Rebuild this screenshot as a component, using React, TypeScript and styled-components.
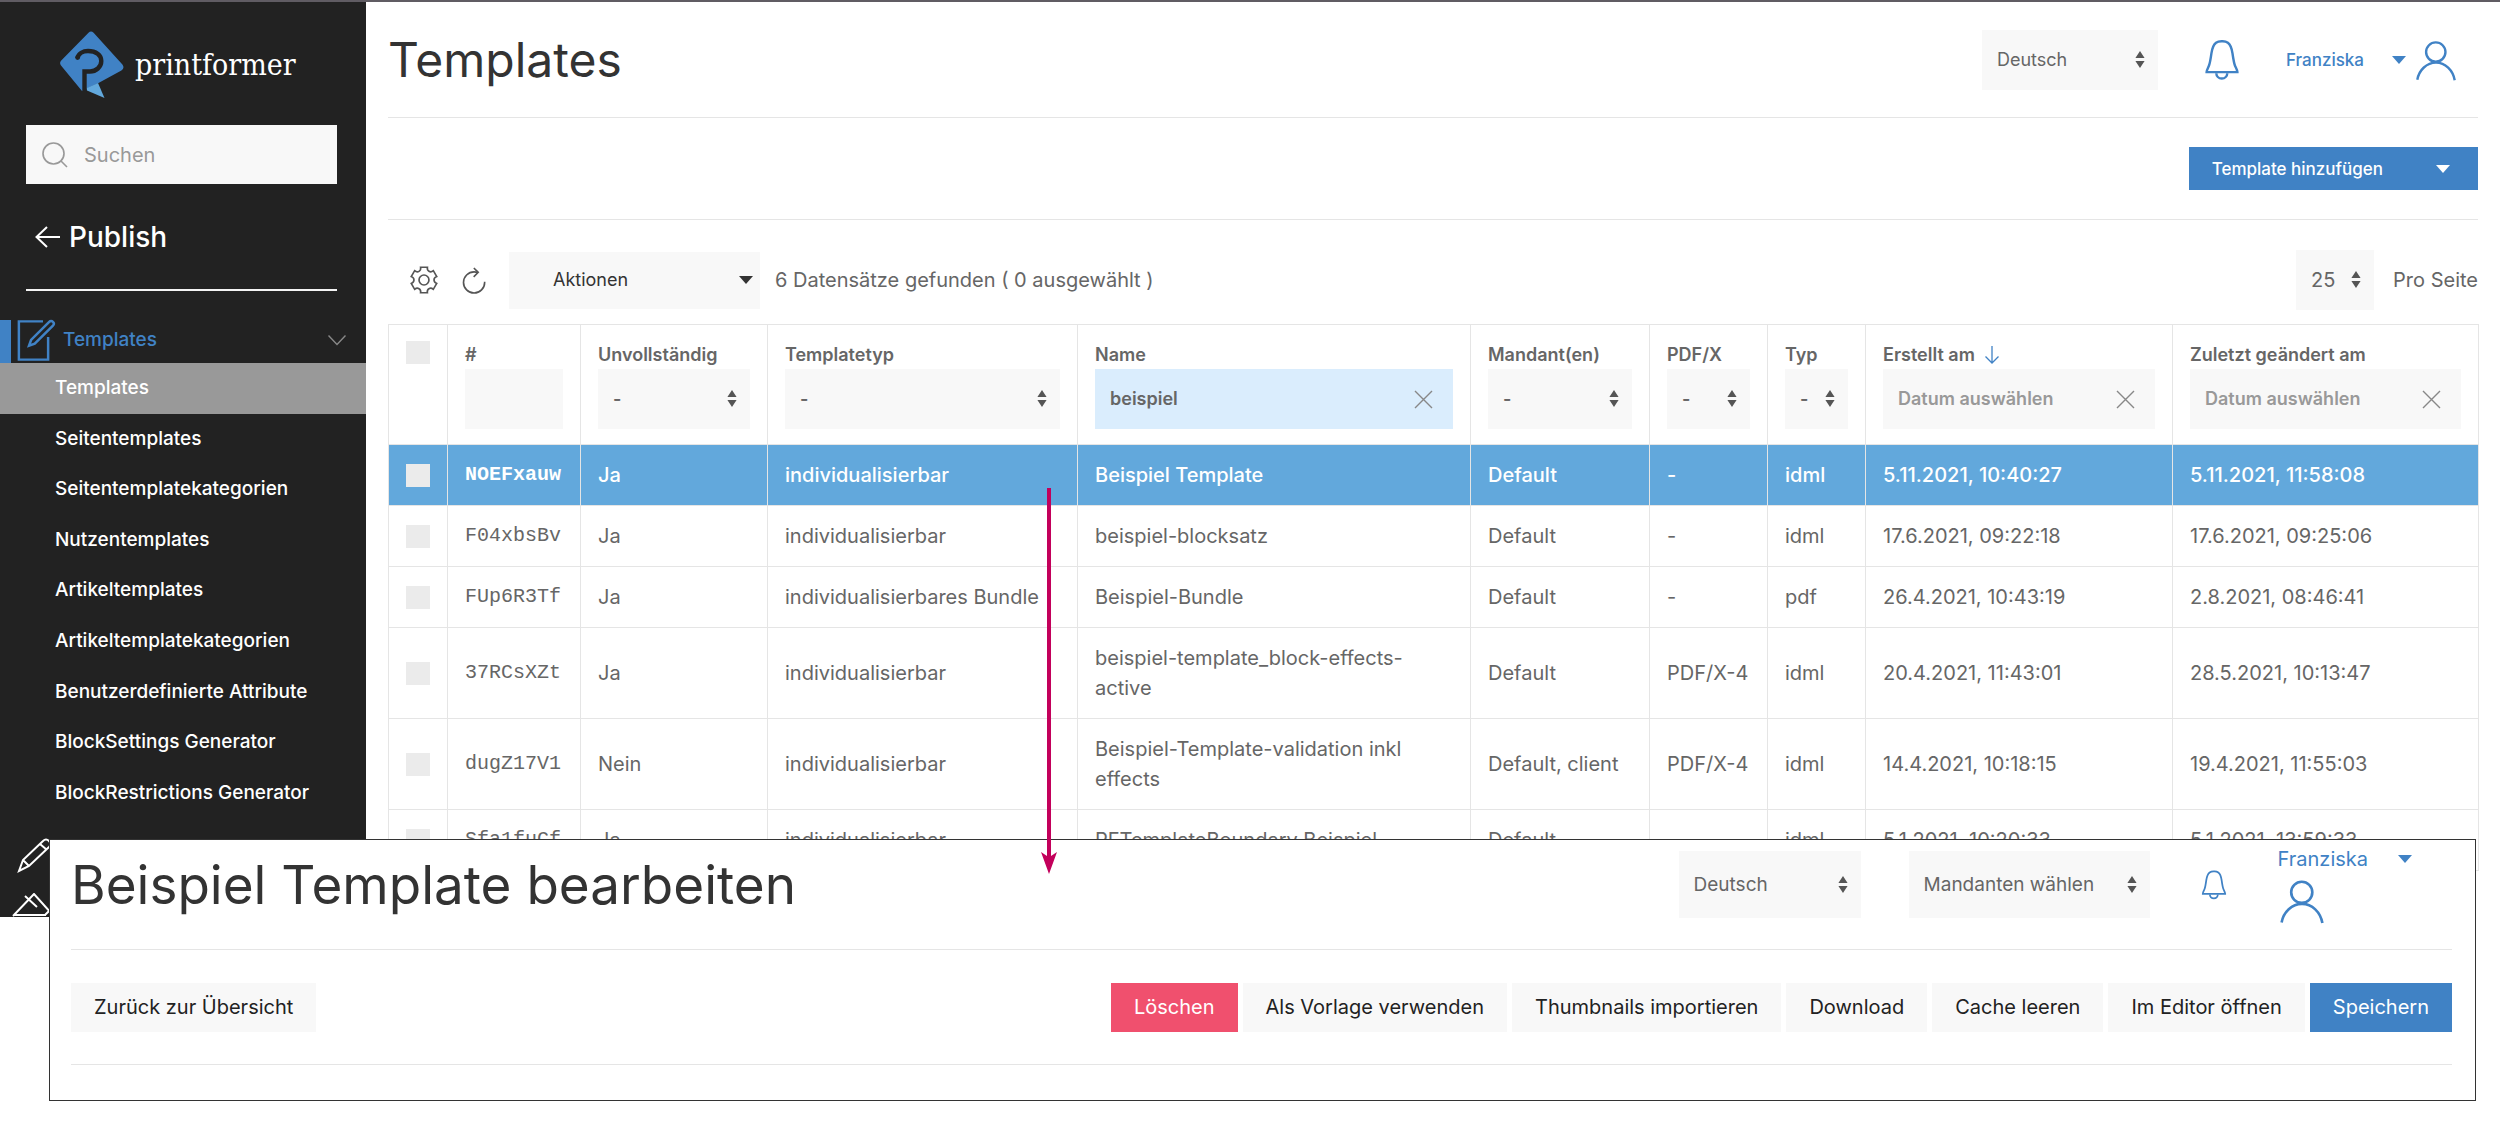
import React from "react";
import styled, { createGlobalStyle, css } from "styled-components";

const blue = "#4082c5";
const muted = "#f8f8f8";
const line = "#e5e5e5";

const GlobalStyle = createGlobalStyle`
  *, *::before, *::after { box-sizing: border-box; }
  body {
    margin: 0;
    background: #fff;
    color: #666;
    font-family: Inter, "Liberation Sans", sans-serif;
    font-size: 20px;
    line-height: 30px;
  }
  h1, h2, p, ul { margin: 0; padding: 0; font-weight: 400; }
  ul { list-style: none; }
  button, input, select { font: inherit; color: inherit; border: 0; border-radius: 0; margin: 0; }
  a { color: inherit; text-decoration: none; }
  svg { display: block; flex: none; }
`;

/* ---------- shared ---------- */

const Icon = styled.svg<{ $size: number; $stroke?: number }>`
  width: ${(p) => p.$size}px;
  height: ${(p) => p.$size}px;
  fill: none;
  stroke: currentColor;
  stroke-width: ${(p) => p.$stroke ?? 1.1};
`;

const Caret = styled.span`
  flex: none;
  border: 7px solid transparent;
  border-top: 8px solid currentColor;
  border-bottom: 0;
`;

const SelectBox = styled.span<{ $height?: number; $width?: string; $size?: number }>`
  display: grid;
  align-items: center;
  width: ${(p) => p.$width ?? "100%"};
  height: ${(p) => p.$height ?? 60}px;
  background: ${muted};
  font-size: ${(p) => p.$size ?? 18}px;

  > * { grid-area: 1 / 1; }
  > svg { justify-self: end; margin-right: 13px; fill: #555; pointer-events: none; }
`;

const NativeSelect = styled.select`
  appearance: none;
  width: 100%;
  height: 100%;
  padding: 0 30px 0 15px;
  background: transparent;
`;

function Select(props: { label: string; value: string; height?: number; width?: string; size?: number }) {
  return (
    <SelectBox $height={props.height} $width={props.width} $size={props.size}>
      <NativeSelect aria-label={props.label} defaultValue={props.value}>
        <option>{props.value}</option>
      </NativeSelect>
      <svg width="10" height="18" viewBox="0 0 10 18" aria-hidden="true">
        <path d="M5 0 L9.6 7 H0.4 Z M0.4 10 H9.6 L5 17 Z" />
      </svg>
    </SelectBox>
  );
}

function Bell({ size }: { size: number }) {
  return (
    <Icon $size={size} viewBox="0 0 20 20" aria-hidden="true">
      <path d="M17,15.5 L3,15.5 C2.99,14.61 3.79,13.34 4.1,12.51 C4.58,11.3 4.72,10.35 5.19,7.01 C5.54,4.53 5.89,3.2 7.28,2.16 C8.13,1.56 9.37,1.5 9.81,1.5 L9.96,1.5 C9.96,1.5 11.62,1.41 12.67,2.17 C14.08,3.2 14.42,4.54 14.77,7.02 C15.26,10.35 15.4,11.31 15.87,12.52 C16.2,13.34 17.01,14.61 17,15.5 Z" />
      <path d="M12.39,16 C12.39,17.37 11.35,18.43 9.91,18.43 C8.48,18.43 7.42,17.37 7.42,16" />
    </Icon>
  );
}

function User({ size }: { size: number }) {
  return (
    <Icon $size={size} viewBox="0 0 20 20" aria-hidden="true">
      <circle cx="9.9" cy="6.4" r="4.4" />
      <path d="M1.5,19 C2.3,14.5 5.8,11.2 10,11.2 C14.2,11.2 17.7,14.6 18.5,19.2" />
    </Icon>
  );
}

/* ---------- sidebar ---------- */

const Window = styled.div`
  display: flex;
  border-top: 2px solid #605c63;
`;

const Sidebar = styled.aside`
  flex: 0 0 366px;
  min-width: 0;
  display: flex;
  flex-direction: column;
  padding-top: 29px;
  background: #222;
  color: #fff;
`;

const Brand = styled.a`
  display: flex;
  align-items: center;
  gap: 11px;
  margin: 0 60px 26px;
  font-family: "DejaVu Serif Condensed", "DejaVu Serif", serif;
  font-size: 30px;
`;

const SearchBox = styled.label`
  display: flex;
  align-items: center;
  gap: 14px;
  height: 59px;
  margin: 0 29px 31px 26px;
  padding: 0 14px;
  background: ${muted};
  color: #999;
`;

const SearchInput = styled.input`
  flex: 1;
  min-width: 0;
  padding: 0;
  background: transparent;
  &::placeholder { color: #999; opacity: 1; }
`;

const BackLink = styled.a`
  display: flex;
  align-items: center;
  gap: 8px;
  margin: 0 29px 29px 26px;
  padding: 0 0 30px 9px;
  border-bottom: 2px solid #f4f4f4;
  font-size: 28px;
  font-weight: 500;
  line-height: 44px;
`;

const MenuGroup = styled.a`
  display: flex;
  align-items: center;
  height: 43px;
  padding: 0 20px 3px 0;
  border-left: 11px solid ${blue};
  color: ${blue};
  font-size: 19px;
  font-weight: 500;

  > svg:last-child { margin-left: auto; color: #888; }
`;

const MenuGroupLabel = styled.span`
  margin-left: 7px;
`;

const SubMenu = styled.ul`
  flex: 1;
  display: grid;
  grid-auto-rows: 1fr;
`;

const SubMenuLink = styled.a<{ $active?: boolean }>`
  display: flex;
  align-items: center;
  height: 100%;
  padding-left: 55px;
  font-size: 19px;
  font-weight: 500;
  ${(p) => p.$active && css`background: #999;`}
`;

const Rail = styled.div`
  display: flex;
  flex-direction: column;
  gap: 20px;
  padding: 20px 0 0 12px;
`;

/* ---------- main ---------- */

const Main = styled.main`
  flex: 1;
  min-width: 0;
  padding: 0 22px 46px;
`;

const Header = styled.header`
  display: flex;
  align-items: center;
  height: 116px;
  padding-right: 20px;
  border-bottom: 1px solid ${line};
`;

const Title = styled.h1`
  margin-right: auto;
  color: #333;
  font-size: 48px;
  line-height: 60px;
`;

const IconButton = styled.button`
  display: flex;
  padding: 0;
  background: transparent;
`;

const BlueIconButton = styled(IconButton)`
  margin: 0 42px;
  color: ${blue};
`;

const UserLink = styled.a`
  display: flex;
  align-items: center;
  gap: 8px;
  color: ${blue};
  font-size: 17px;
  font-weight: 500;
`;

const UserName = styled.span`
  margin-right: 20px;
`;

const ActionBar = styled.div`
  display: flex;
  align-items: center;
  justify-content: flex-end;
  height: 102px;
  border-bottom: 1px solid ${line};
`;

const AddButton = styled.button`
  display: flex;
  align-items: center;
  gap: 53px;
  height: 43px;
  padding: 0 28px 0 23px;
  background: ${blue};
  color: #fff;
  font-size: 17px;
  font-weight: 500;
`;

const Toolbar = styled.div`
  display: flex;
  align-items: center;
  gap: 20px;
  height: 104px;
  padding: 16px 0 0 21px;
  color: #555;
`;

const BulkButton = styled.button`
  display: flex;
  align-items: center;
  justify-content: space-between;
  width: 251px;
  height: 57px;
  padding: 0 7px 0 44px;
  background: ${muted};
  color: #333;
  font-size: 18px;
`;

const ResultCount = styled.p`
  margin-right: auto;
  margin-left: -5px;
  color: #666;
`;

const PerPage = styled.label`
  display: flex;
  align-items: center;
  gap: 19px;
  color: #666;
`;

/* ---------- table ---------- */

const Table = styled.table`
  width: 100%;
  table-layout: fixed;
  border-collapse: collapse;

  th, td {
    border: 1px solid ${line};
    text-align: left;
  }
`;

const HeadCell = styled.th`
  padding: 16px 17px 15px;
  vertical-align: top;
  font-size: 18px;
  font-weight: 600;
  line-height: 28px;
`;

const HeadLabel = styled.span`
  display: flex;
  align-items: center;
  gap: 8px;
  white-space: nowrap;
`;

const FilterBox = styled.span<{ $active?: boolean }>`
  display: flex;
  align-items: center;
  height: 60px;
  padding: 0 20px 0 15px;
  background: ${(p) => (p.$active ? "#daedfd" : muted)};
`;

const FilterInput = styled.input`
  flex: 1;
  min-width: 0;
  width: 100%;
  padding: 0;
  background: transparent;
  &::placeholder { color: #999; opacity: 1; }
`;

const ClearButton = styled(IconButton)`
  color: #888;
`;

const Cell = styled.td`
  padding: 15px 17px;
`;

const CodeCell = styled(Cell)`
  font-family: "Courier New", "Liberation Mono", monospace;
  white-space: nowrap;
`;

const Row = styled.tr<{ $selected?: boolean }>`
  ${(p) =>
    p.$selected &&
    css`
      background: #62a8dc;
      color: #fff;
      font-weight: 500;

      ${CodeCell} { font-weight: 700; }
    `}
`;

const Checkbox = styled.input`
  display: block;
  appearance: none;
  width: 24px;
  height: 23px;
  background: #ebebeb;
`;

/* ---------- edit panel ---------- */

const Panel = styled.section`
  position: relative;
  margin: -78px 24px 20px 49px;
  padding: 0 23px 35px 21px;
  background: #fff;
  border: 1px solid #333;
`;

const PanelHeader = styled.header`
  display: flex;
  align-items: center;
  gap: 48px;
  height: 110px;
  padding: 0 40px 20px 0;
  border-bottom: 1px solid ${line};
`;

const PanelTitle = styled.h2`
  margin-right: auto;
  color: #333;
  font-size: 53px;
  line-height: 68px;
  white-space: nowrap;
`;

const PanelBell = styled(IconButton)`
  color: ${blue};
`;

const PanelUser = styled.a`
  display: grid;
  row-gap: 3px;
  color: ${blue};
`;

const PanelUserName = styled.span`
  display: flex;
  align-items: center;
  gap: 30px;
`;

const PanelActions = styled.div`
  display: flex;
  align-items: center;
  gap: 5px;
  height: 115px;
  border-bottom: 1px solid ${line};

  > :first-child { margin-right: auto; }
`;

const tones = {
  plain: css`background: ${muted}; color: #222;`,
  danger: css`background: #f0506e; color: #fff;`,
  primary: css`background: ${blue}; color: #fff;`,
};

const PanelButton = styled.button<{ $tone?: keyof typeof tones }>`
  height: 49px;
  padding: 0 23px;
  white-space: nowrap;
  ${(p) => tones[p.$tone ?? "plain"]}
`;

const Page = styled.div`
  position: relative;
`;

const Pointer = styled.svg`
  position: absolute;
  left: 1041px;
  top: 488px;
  fill: #c3005b;
`;

/* ---------- data ---------- */

const subMenu = [
  "Templates",
  "Seitentemplates",
  "Seitentemplatekategorien",
  "Nutzentemplates",
  "Artikeltemplates",
  "Artikeltemplatekategorien",
  "Benutzerdefinierte Attribute",
  "BlockSettings Generator",
  "BlockRestrictions Generator",
];

const columns = [59, 133, 187, 310, 393, 179, 118, 98, 307, 306];

const rows = [
  ["NOEFxauw", "Ja", "individualisierbar", "Beispiel Template", "Default", "-", "idml", "5.11.2021, 10:40:27", "5.11.2021, 11:58:08"],
  ["F04xbsBv", "Ja", "individualisierbar", "beispiel-blocksatz", "Default", "-", "idml", "17.6.2021, 09:22:18", "17.6.2021, 09:25:06"],
  ["FUp6R3Tf", "Ja", "individualisierbares Bundle", "Beispiel-Bundle", "Default", "-", "pdf", "26.4.2021, 10:43:19", "2.8.2021, 08:46:41"],
  ["37RCsXZt", "Ja", "individualisierbar", "beispiel-template_block-effects-active", "Default", "PDF/X-4", "idml", "20.4.2021, 11:43:01", "28.5.2021, 10:13:47"],
  ["dugZ17V1", "Nein", "individualisierbar", "Beispiel-Template-validation inkl effects", "Default, client", "PDF/X-4", "idml", "14.4.2021, 10:18:15", "19.4.2021, 11:55:03"],
  ["Sfa1fuCf", "Ja", "individualisierbar", "PFTemplateBoundary Beispiel", "Default", "-", "idml", "5.1.2021, 10:20:33", "5.1.2021, 13:59:33"],
];

function Clear({ label }: { label: string }) {
  return (
    <ClearButton type="button" aria-label={label}>
      <Icon $size={19} $stroke={1.4} viewBox="0 0 19 19" aria-hidden="true">
        <path d="M1 1 L18 18 M18 1 L1 18" />
      </Icon>
    </ClearButton>
  );
}

function SelectHead({ title }: { title: string }) {
  return (
    <HeadCell scope="col">
      <HeadLabel>{title}</HeadLabel>
      <Select label={`${title} filtern`} value="-" />
    </HeadCell>
  );
}

function DateHead({ title, sorted }: { title: string; sorted?: boolean }) {
  return (
    <HeadCell scope="col">
      <HeadLabel>
        {title}
        {sorted && (
          <Icon $size={18} $stroke={1.3} viewBox="0 0 18 18" color={blue} aria-hidden="true">
            <path d="M9 0 V17 M2.5 10.5 L9 17 L15.5 10.5" />
          </Icon>
        )}
      </HeadLabel>
      <FilterBox>
        <FilterInput type="text" aria-label={`${title} filtern`} placeholder="Datum auswählen" />
        <Clear label={`${title} zurücksetzen`} />
      </FilterBox>
    </HeadCell>
  );
}

function Logo() {
  return (
    <svg width="64" height="68" viewBox="0 0 64 68" aria-hidden="true">
      <path
        fill={blue}
        d="M28.5 1.8 Q31 -0.6 33.6 1.8 L62.4 33.4 Q65 37 61.4 39.6 L38.5 52 L27 57.5 L26 60 L22 60 L1 34.6 Q-0.8 32 1 29.8 Z"
      />
      <path fill="#62a8dc" d="M27 57 L38 52 L44.5 67 L27 59.5 Z" />
      <path
        d="M17.5 27 C18.5 22.5 23 20 28 20 C36 20 41.3 24 41.3 30 C41.3 36 36 40.5 30 40.5 L24.5 40.5 L24.5 63"
        fill="none"
        stroke="#222"
        strokeWidth="4.4"
      />
      <circle cx="17.6" cy="26.6" r="2.4" fill="#222" />
    </svg>
  );
}

export default function App() {
  return (
    <Page>
      <GlobalStyle />
      <Window>
        <Sidebar>
          <Brand href="#">
            <Logo />
            printformer
          </Brand>
          <SearchBox>
            <Icon $size={30} viewBox="0 0 20 20" aria-hidden="true">
              <circle cx="9" cy="9" r="7" />
              <path d="M14,14 L18,18" />
            </Icon>
            <SearchInput type="search" aria-label="Suchen" placeholder="Suchen" />
          </SearchBox>
          <BackLink href="#">
            <svg width="26" height="22" viewBox="0 0 26 22" fill="none" stroke="currentColor" strokeWidth="2" aria-hidden="true">
              <path d="M25 11 H1.5 M12 1 L1.5 11 L12 21" />
            </svg>
            Publish
          </BackLink>
          <nav aria-label="Bereich">
            <MenuGroup href="#">
              <Icon $size={45} viewBox="0 0 20 20" aria-hidden="true">
                <path d="M18.65,1.68 C18.41,1.45 18.109,1.33 17.81,1.33 C17.499,1.33 17.209,1.45 16.98,1.68 L8.92,9.76 L8,12.33 L10.55,11.41 L18.651,3.34 C19.12,2.87 19.12,2.15 18.65,1.68 Z" />
                <polyline points="16.5 8.482 16.5 18.5 3.5 18.5 3.5 1.5 14.211 1.5" />
              </Icon>
              <MenuGroupLabel>Templates</MenuGroupLabel>
              <svg width="18" height="11" viewBox="0 0 18 11" fill="none" stroke="currentColor" strokeWidth="1.4" aria-hidden="true">
                <path d="M0.5 0.5 L9 9.5 L17.5 0.5" />
              </svg>
            </MenuGroup>
          </nav>
          <SubMenu>
            {subMenu.map((item, i) => (
              <li key={item}>
                <SubMenuLink href="#" $active={i === 0}>{item}</SubMenuLink>
              </li>
            ))}
          </SubMenu>
          <Rail>
            <svg width="40" height="35" viewBox="0 0 40 35" fill="none" stroke="#fff" strokeWidth="2" aria-hidden="true">
              <path d="M7 33 L11 22 L31 3 Q34 0 37 3 Q40 6 37 9 L17 28 Z M28 6 L35 12 M11 22 L17 28" />
            </svg>
            <svg width="40" height="24" viewBox="0 0 40 24" fill="none" stroke="#fff" strokeWidth="2" aria-hidden="true">
              <path d="M1 23 L22 1 L40 21 M13 3 L25 14 M2 22 H34 M33 22 L40 15" />
            </svg>
          </Rail>
        </Sidebar>

        <Main>
          <Header>
            <Title>Templates</Title>
            <Select label="Sprache" value="Deutsch" width="176px" />
            <BlueIconButton type="button" aria-label="Benachrichtigungen">
              <Bell size={44} />
            </BlueIconButton>
            <UserLink href="#">
              <UserName>Franziska</UserName>
              <Caret />
              <User size={44} />
            </UserLink>
          </Header>

          <ActionBar>
            <AddButton type="button">
              Template hinzufügen
              <Caret />
            </AddButton>
          </ActionBar>

          <Toolbar>
            <IconButton type="button" aria-label="Einstellungen">
              <Icon $size={30} viewBox="0 0 20 20" aria-hidden="true">
                <circle cx="9.997" cy="10" r="3.31" />
                <path d="M18.488,12.285 L16.205,16.237 C15.322,15.496 14.185,15.281 13.303,15.791 C12.428,16.289 12.047,17.373 12.246,18.5 L7.735,18.5 C7.938,17.374 7.553,16.299 6.684,15.791 C5.801,15.27 4.655,15.492 3.773,16.237 L1.5,12.285 C2.573,11.871 3.317,10.999 3.317,9.991 C3.305,8.98 2.573,8.121 1.5,7.716 L3.765,3.784 C4.645,4.516 5.794,4.738 6.687,4.232 C7.555,3.722 7.939,2.637 7.735,1.5 L12.263,1.5 C12.072,2.637 12.441,3.71 13.314,4.22 C14.206,4.73 15.343,4.516 16.225,3.794 L18.487,7.714 C17.404,8.117 16.661,8.988 16.67,10.009 C16.672,11.018 17.415,11.88 18.488,12.285 Z" />
              </Icon>
            </IconButton>
            <IconButton type="button" aria-label="Aktualisieren">
              <Icon $size={30} viewBox="0 0 20 20" aria-hidden="true">
                <path d="M17.08,11.15 C17.09,11.31 17.1,11.47 17.1,11.64 C17.1,15.53 13.94,18.69 10.05,18.69 C6.16,18.68 3,15.53 3,11.63 C3,7.74 6.16,4.58 10.05,4.58 C10.9,4.58 11.71,4.73 12.46,5" />
                <polyline points="9.9 2 12.79 4.89 9.79 7.9" />
              </Icon>
            </IconButton>
            <BulkButton type="button">
              Aktionen
              <Caret />
            </BulkButton>
            <ResultCount>6 Datensätze gefunden ( 0 ausgewählt )</ResultCount>
            <PerPage>
              <Select label="Pro Seite" value="25" width="78px" size={20} />
              Pro Seite
            </PerPage>
          </Toolbar>

          <Table>
            <colgroup>
              {columns.map((w, i) => (
                <col key={i} style={{ width: w }} />
              ))}
            </colgroup>
            <thead>
              <tr>
                <HeadCell scope="col">
                  <Checkbox type="checkbox" aria-label="Alle auswählen" />
                </HeadCell>
                <HeadCell scope="col">
                  <HeadLabel>#</HeadLabel>
                  <FilterBox>
                    <FilterInput type="text" aria-label="# filtern" />
                  </FilterBox>
                </HeadCell>
                <SelectHead title="Unvollständig" />
                <SelectHead title="Templatetyp" />
                <HeadCell scope="col">
                  <HeadLabel>Name</HeadLabel>
                  <FilterBox $active>
                    <FilterInput type="text" aria-label="Name filtern" defaultValue="beispiel" />
                    <Clear label="Name zurücksetzen" />
                  </FilterBox>
                </HeadCell>
                <SelectHead title="Mandant(en)" />
                <SelectHead title="PDF/X" />
                <SelectHead title="Typ" />
                <DateHead title="Erstellt am" sorted />
                <DateHead title="Zuletzt geändert am" />
              </tr>
            </thead>
            <tbody>
              {rows.map(([code, ...cells], i) => (
                <Row key={code} $selected={i === 0}>
                  <Cell>
                    <Checkbox type="checkbox" aria-label={`${code} auswählen`} />
                  </Cell>
                  <CodeCell>{code}</CodeCell>
                  {cells.map((text, j) => (
                    <Cell key={j}>{text}</Cell>
                  ))}
                </Row>
              ))}
            </tbody>
          </Table>
        </Main>
      </Window>

      <Panel>
        <PanelHeader>
          <PanelTitle>Beispiel Template bearbeiten</PanelTitle>
          <Select label="Sprache" value="Deutsch" width="182px" height={67} size={19} />
          <Select label="Mandant" value="Mandanten wählen" width="241px" height={67} size={19} />
          <PanelBell type="button" aria-label="Benachrichtigungen">
            <Bell size={32} />
          </PanelBell>
          <PanelUser href="#">
            <PanelUserName>
              Franziska
              <Caret />
            </PanelUserName>
            <User size={48} />
          </PanelUser>
        </PanelHeader>
        <PanelActions>
          <PanelButton type="button">Zurück zur Übersicht</PanelButton>
          <PanelButton type="button" $tone="danger">Löschen</PanelButton>
          <PanelButton type="button">Als Vorlage verwenden</PanelButton>
          <PanelButton type="button">Thumbnails importieren</PanelButton>
          <PanelButton type="button">Download</PanelButton>
          <PanelButton type="button">Cache leeren</PanelButton>
          <PanelButton type="button">Im Editor öffnen</PanelButton>
          <PanelButton type="button" $tone="primary">Speichern</PanelButton>
        </PanelActions>
      </Panel>

      <Pointer width="16" height="386" viewBox="0 0 16 386" aria-hidden="true">
        <path d="M6 0 H10 V368 L16 364 L8 386 L0 364 L6 368 Z" />
      </Pointer>
    </Page>
  );
}
